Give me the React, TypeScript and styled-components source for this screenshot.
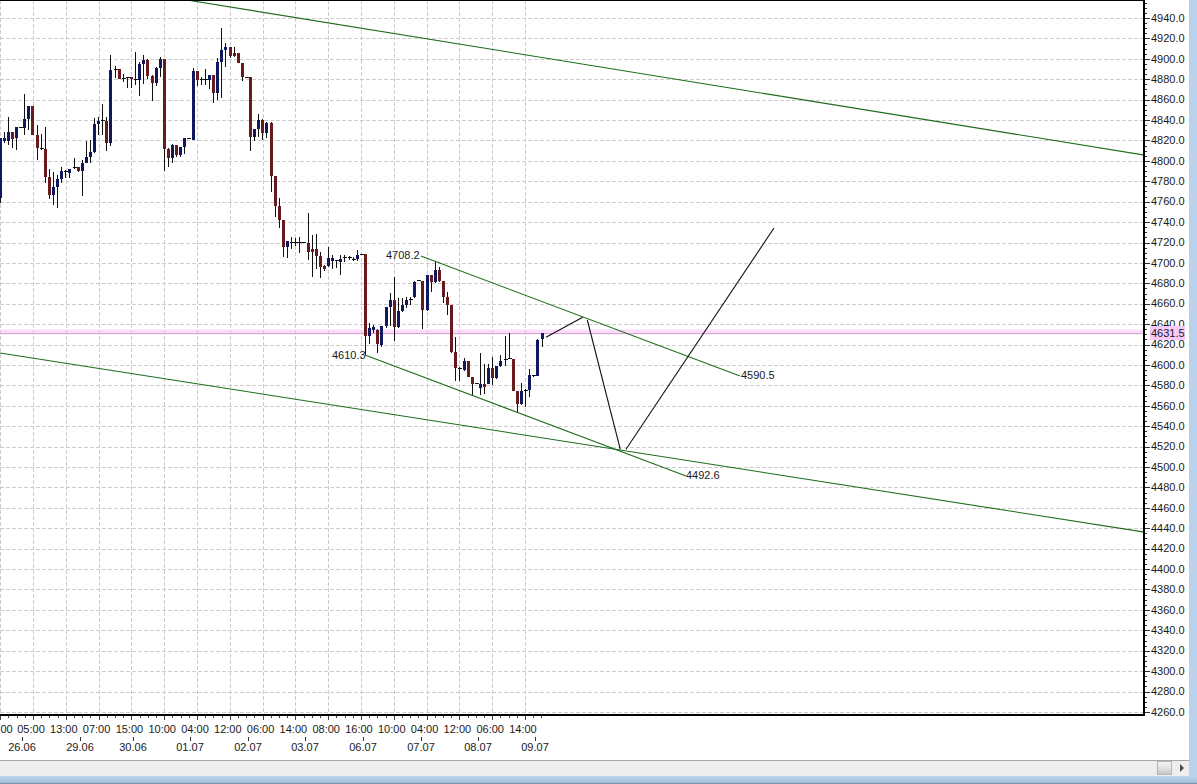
import React from 'react';
import styled, { createGlobalStyle } from 'styled-components';

type Kind = 'r' | 'b' | 'd';
// x, wick top, wick bottom, body top, body bottom, kind
type Candle = [number, number, number, number, number, Kind];

const GlobalStyle = createGlobalStyle`
  html, body {
    margin: 0;
    padding: 0;
    background: #fff;
    overflow: hidden;
  }
`;

const Window = styled.div`
  width: 1197px;
  height: 784px;
  display: flex;
  flex-direction: column;
  overflow: hidden;
  font-family: 'Liberation Sans', Arial, sans-serif;
  font-size: 11px;
  color: #1a1a1a;
`;

const Content = styled.div`
  flex: 1;
  display: flex;
  min-height: 0;
`;

const Body = styled.div`
  width: 1189px;
  display: flex;
  flex-direction: column;
  background: #fff;
`;

const SideChrome = styled.div`
  flex: 1;
  background: #b9d1ea;
`;

const BottomChrome = styled.div`
  height: 8px;
  background: linear-gradient(#bcd3ec, #a9c4df 80%, #5f7f96);
`;

const TopRow = styled.div`
  display: flex;
  height: 716px;
`;

const ChartFrame = styled.div`
  position: relative;
  box-sizing: border-box;
  width: 1145px;
  height: 716px;
  border-top: 1px solid #000;
  border-right: 2px solid #000;
  border-bottom: 2px solid #000;
`;

const ChartCanvas = styled.svg`
  display: block;
`;

const ChartLabel = styled.span<{ $x: number; $y: number }>`
  position: absolute;
  left: ${(p) => p.$x}px;
  top: ${(p) => p.$y - 7}px;
  line-height: 13px;
  white-space: nowrap;
`;

const PriceAxis = styled.div`
  position: relative;
  display: flex;
  width: 44px;
`;

const PriceTicks = styled.svg`
  display: block;
  flex: none;
`;

const PriceLabels = styled.div`
  display: flex;
  flex-direction: column;
  padding-top: 7.8px;
`;

const PriceLabel = styled.div`
  flex: none;
  height: 20.41px;
  line-height: 20.41px;
`;

const CurrentPrice = styled.div`
  position: absolute;
  left: 5px;
  top: 326px;
  width: 35px;
  height: 14px;
  padding-left: 1px;
  box-sizing: border-box;
  line-height: 14px;
  background: #f9c9f9;
`;

const TimeAxis = styled.div`
  flex: 1;
  display: flex;
  flex-direction: column;
  overflow: hidden;
`;

const TimeTicks = styled.svg`
  display: block;
  flex: none;
`;

const TimeRow = styled.div`
  display: flex;
  height: 15px;
  margin-top: 2px;
`;

const DateRow = styled.div`
  display: flex;
  height: 18px;
`;

const TimeCell = styled.div<{ $gap: number }>`
  flex: none;
  width: 0;
  margin-left: ${(p) => p.$gap}px;
  display: flex;
  justify-content: center;
  white-space: nowrap;
  line-height: 15px;
`;

const DateCell = styled(TimeCell)`
  position: relative;
  padding-top: 4px;
  line-height: 13px;

  &::before {
    content: '';
    position: absolute;
    left: 0;
    top: 0;
    width: 1px;
    height: 4px;
    background: #333;
  }
`;

const Scrollbar = styled.div`
  height: 15px;
  display: flex;
  justify-content: flex-end;
  align-items: flex-start;
  border-top: 1px solid #a6a6a6;
  background: #eeeeee;
`;

const Thumb = styled.div`
  box-sizing: border-box;
  width: 15px;
  height: 14px;
  border: 1px solid #b4b4b4;
  background: linear-gradient(#f4f4f4, #e2e2e2 50%, #c6c6c6);
`;

const ArrowRight = styled.div`
  width: 0;
  height: 0;
  margin: 3px 5px 0 8px;
  border-top: 4px solid transparent;
  border-bottom: 4px solid transparent;
  border-left: 4px solid #4a4a4a;
`;

// read off the zoomed crops: 3x coordinates, each group with its own origin
const part1: Candle[] = [
  [1, 355, 550, 355, 533, 'b'], [13, 335, 368, 355, 362, 'b'], [25, 292, 375, 337, 362, 'b'],
  [37, 338, 385, 337, 357, 'r'], [49, 322, 390, 322, 355, 'b'], [61, 320, 325, 322, 322, 'd'],
  [73, 222, 345, 297, 323, 'b'], [85, 258, 330, 258, 297, 'b'], [97, 258, 345, 258, 345, 'r'],
  [112, 316, 420, 345, 383, 'r'], [124, 342, 390, 385, 385, 'd'], [136, 322, 488, 388, 470, 'r'],
  [148, 448, 537, 472, 524, 'r'], [160, 455, 555, 502, 524, 'b'], [172, 465, 563, 478, 500, 'b'],
  [184, 440, 490, 454, 477, 'b'], [196, 450, 475, 455, 455, 'd'], [208, 447, 475, 447, 458, 'b'],
  [223, 415, 447, 442, 442, 'd'], [235, 442, 455, 442, 452, 'r'], [247, 420, 527, 428, 452, 'b'],
  [259, 362, 430, 412, 430, 'b'], [271, 360, 430, 396, 410, 'b'], [283, 295, 398, 312, 396, 'b'],
  [295, 292, 345, 304, 312, 'b'], [307, 252, 345, 302, 302, 'd'], [319, 290, 392, 303, 368, 'r'],
  [331, 105, 378, 150, 368, 'b'], [346, 138, 175, 148, 148, 'd'], [358, 148, 178, 148, 177, 'r'],
  [370, 162, 185, 176, 176, 'd'], [382, 172, 203, 172, 172, 'd'], [394, 170, 203, 170, 178, 'r'],
  [406, 97, 195, 178, 178, 'd'], [418, 125, 227, 132, 180, 'b'], [430, 105, 192, 120, 131, 'b'],
  [442, 117, 178, 120, 167, 'r'], [457, 165, 242, 167, 188, 'r'], [469, 142, 198, 144, 188, 'b'],
  [481, 110, 170, 118, 143, 'b'], [493, 118, 453, 118, 386, 'r'], [505, 385, 440, 387, 415, 'r'],
  [517, 373, 428, 375, 415, 'b'], [529, 375, 410, 376, 405, 'r'], [541, 380, 410, 380, 404, 'b'],
  [553, 355, 402, 354, 380, 'b'], [565, 354, 358, 356, 356, 'd'], [580, 143, 360, 153, 360, 'b'],
  [592, 153, 197, 153, 180, 'r'], [604, 170, 195, 178, 178, 'd'], [616, 148, 195, 178, 178, 'd'],
  [628, 165, 207, 165, 180, 'b'], [640, 165, 248, 165, 218, 'r'], [652, 115, 240, 126, 218, 'b'],
  [664, 25, 233, 90, 126, 'b'], [676, 70, 140, 82, 90, 'b'], [691, 82, 115, 82, 108, 'r'],
  [703, 82, 110, 100, 108, 'r'], [715, 100, 130, 100, 128, 'r'], [727, 128, 182, 130, 172, 'r'],
  [739, 170, 175, 172, 172, 'd'], [751, 172, 392, 172, 350, 'r'], [763, 328, 362, 328, 350, 'b'],
  [775, 283, 350, 300, 327, 'b'], [787, 297, 360, 300, 338, 'r'], [799, 305, 353, 308, 338, 'b'],
];

const part2: Candle[] = [
  [94, 35, 245, 38, 197, 'r'], [106, 198, 320, 198, 287, 'r'], [118, 265, 353, 288, 330, 'r'],
  [130, 330, 440, 330, 410, 'r'], [142, 393, 443, 393, 410, 'b'], [154, 382, 418, 397, 397, 'd'],
  [166, 385, 408, 397, 397, 'd'], [178, 380, 430, 397, 397, 'd'], [190, 395, 399, 397, 397, 'd'],
  [205, 310, 450, 400, 425, 'r'], [217, 375, 500, 418, 425, 'r'], [229, 373, 478, 418, 437, 'r'],
  [241, 425, 505, 438, 472, 'r'], [253, 465, 483, 468, 476, 'r'], [265, 412, 470, 445, 468, 'b'],
  [277, 435, 478, 445, 452, 'b'], [289, 450, 475, 452, 452, 'd'], [301, 435, 495, 448, 455, 'b'],
  [313, 435, 457, 443, 443, 'd'], [328, 437, 450, 441, 441, 'd'], [340, 440, 452, 447, 447, 'd'],
  [352, 420, 452, 436, 447, 'b'], [364, 431, 435, 433, 433, 'd'],
];

const part3: Candle[] = [
  [46, 43, 345, 43, 288, 'r'], [58, 250, 312, 265, 288, 'b'], [70, 255, 280, 262, 270, 'b'],
  [82, 268, 340, 270, 313, 'r'], [94, 258, 322, 258, 315, 'b'], [109, 200, 265, 202, 258, 'b'],
  [121, 160, 258, 180, 200, 'b'], [133, 112, 302, 180, 260, 'r'], [145, 175, 264, 212, 262, 'b'],
  [157, 175, 215, 195, 212, 'b'], [169, 170, 205, 180, 195, 'b'], [181, 172, 195, 178, 178, 'd'],
  [193, 123, 175, 125, 172, 'b'], [205, 120, 124, 122, 122, 'd'], [217, 122, 268, 122, 210, 'r'],
  [232, 105, 212, 105, 210, 'b'], [244, 105, 155, 105, 125, 'r'], [256, 65, 128, 90, 126, 'b'],
  [268, 80, 125, 90, 122, 'r'], [280, 124, 190, 124, 170, 'r'], [292, 155, 225, 170, 195, 'r'],
  [304, 195, 340, 195, 335, 'r'], [316, 292, 422, 336, 385, 'r'], [328, 380, 422, 385, 385, 'd'],
  [343, 355, 392, 362, 390, 'b'], [355, 363, 412, 363, 410, 'r'], [367, 410, 465, 410, 432, 'r'],
  [379, 428, 432, 430, 430, 'd'], [391, 340, 465, 432, 443, 'b'], [403, 372, 462, 432, 442, 'r'],
  [415, 372, 433, 385, 432, 'b'], [427, 350, 435, 385, 413, 'r'], [439, 378, 416, 378, 415, 'b'],
  [451, 345, 380, 363, 378, 'b'], [466, 288, 378, 358, 358, 'd'], [478, 280, 358, 355, 355, 'd'],
  [490, 358, 454, 358, 452, 'r'], [502, 454, 517, 454, 492, 'r'], [514, 430, 495, 453, 493, 'b'],
  [526, 448, 500, 450, 450, 'd'], [538, 388, 472, 405, 450, 'b'], [550, 404, 410, 406, 406, 'd'],
  [562, 297, 408, 300, 408, 'b'], [577, 280, 322, 280, 298, 'b'],
];

const groups: { ox: number; oy: number; items: Candle[] }[] = [
  { ox: 0, oy: 20, items: part1 },
  { ox: 240, oy: 110, items: part2 },
  { ox: 350, oy: 240, items: part3 },
];

const candleColors = { r: '#681a1c', b: '#101860' };

const priceLabels = Array.from({ length: 35 }, (_, i) => (4940 - i * 20).toFixed(1));
const gridY = priceLabels.map((_, i) => 18 + i * 20.41);
// vertical grid and time ticks stop at the last bar
const gridX = [0, ...Array.from({ length: 16 }, (_, i) => 33 + i * 32.8)];

const times = ['05:00', '13:00', '07:00', '15:00', '10:00', '04:00', '12:00', '06:00', '14:00', '08:00', '16:00', '10:00', '04:00', '12:00', '06:00', '14:00'];
const dates: [string, number][] = [
  ['26.06', 22], ['29.06', 58], ['30.06', 53], ['01.07', 57], ['02.07', 58],
  ['03.07', 57], ['06.07', 58], ['07.07', 58], ['08.07', 57], ['09.07', 57],
];

const greenLines = [
  [187, 0, 1144, 155],
  [0, 353, 1144, 532],
  [421, 256, 740, 376],
  [365, 355, 686, 476],
];
const blackLines = [
  [546, 337.3, 582.7, 317.3],
  [587.3, 320, 620.3, 449.3],
  [626, 449.3, 774, 228],
];

const chartLabels: [string, number, number][] = [
  ['4708.2', 386, 255],
  ['4610.3', 332, 355],
  ['4590.5', 741, 375],
  ['4492.6', 686, 475],
];

const Candles: React.FC = () => (
  <g>
    {groups.map((group) =>
      group.items.map(([x, top, bottom, bodyTop, bodyBottom, kind]) => {
        const cx = Math.floor(group.ox + x / 3) + 0.5;
        const y = (v: number) => group.oy + v / 3;
        return (
          <g key={`${group.ox}-${x}`}>
            <line x1={cx} x2={cx} y1={y(top)} y2={y(bottom)} stroke="#111" strokeWidth={1} shapeRendering="crispEdges" />
            {kind === 'd' ? (
              <line x1={cx - 2} x2={cx + 2} y1={y(bodyTop)} y2={y(bodyTop)} stroke="#111" strokeWidth={1} shapeRendering="crispEdges" />
            ) : (
              <rect x={cx - 1.5} y={y(bodyTop)} width={3} height={y(bodyBottom) - y(bodyTop)} fill={candleColors[kind]} shapeRendering="crispEdges" />
            )}
          </g>
        );
      }),
    )}
  </g>
);

const Chart: React.FC = () => (
  <ChartCanvas width={1143} height={713} viewBox="0 1 1143 713">
    <rect x={0} y={329.5} width={1143} height={5} fill="#fbdcfb" />
    {gridY.map((y) => (
      <line key={y} x1={0} x2={1143} y1={Math.round(y) + 0.5} y2={Math.round(y) + 0.5} stroke="#cdcdcd" strokeDasharray="4 2" />
    ))}
    {gridX.map((x) => (
      <line key={x} x1={Math.round(x) + 0.5} x2={Math.round(x) + 0.5} y1={0} y2={714} stroke="#cdcdcd" strokeDasharray="4 2" />
    ))}
    <line x1={0} x2={1143} y1={333.5} y2={333.5} stroke="#d6a8d6" />
    <Candles />
    {greenLines.map(([x1, y1, x2, y2]) => (
      <line key={x1} x1={x1} y1={y1} x2={x2} y2={y2} stroke="#1c6c1c" strokeWidth={1.1} />
    ))}
    {blackLines.map(([x1, y1, x2, y2]) => (
      <line key={x1} x1={x1} y1={y1} x2={x2} y2={y2} stroke="#111" strokeWidth={1.1} />
    ))}
  </ChartCanvas>
);

const App: React.FC = () => (
  <Window>
    <GlobalStyle />
    <Content>
      <Body>
        <TopRow>
          <ChartFrame>
            <Chart />
            {chartLabels.map(([text, x, y]) => (
              <ChartLabel key={text} $x={x} $y={y}>
                {text}
              </ChartLabel>
            ))}
          </ChartFrame>
          <PriceAxis>
            <PriceTicks width={6} height={716}>
              {Array.from({ length: 141 }, (_, i) => {
                const y = Math.round(18 + (i - 3) * 5.1025) + 0.5;
                return <line key={i} x1={0} x2={(i - 3) % 4 === 0 ? 5 : 2} y1={y} y2={y} stroke="#333" />;
              })}
            </PriceTicks>
            <PriceLabels>
              {priceLabels.map((label) => (
                <PriceLabel key={label}>{label}</PriceLabel>
              ))}
            </PriceLabels>
            <CurrentPrice>4631.5</CurrentPrice>
          </PriceAxis>
        </TopRow>
        <TimeAxis>
          <TimeTicks width={1145} height={4}>
            {Array.from({ length: 67 }, (_, i) => {
              const x = Math.round(33 + (i - 4) * 8.2) + 0.5;
              return <line key={i} x1={x} x2={x} y1={0} y2={i % 4 === 0 ? 4 : 2} stroke="#444" />;
            })}
          </TimeTicks>
          <TimeRow>
            <TimeCell $gap={6.5}>00</TimeCell>
            {times.map((time, i) => (
              <TimeCell key={i} $gap={i === 0 ? 24.5 : 32.8}>
                {time}
              </TimeCell>
            ))}
          </TimeRow>
          <DateRow>
            {dates.map(([date, gap]) => (
              <DateCell key={date} $gap={gap}>
                {date}
              </DateCell>
            ))}
          </DateRow>
        </TimeAxis>
        <Scrollbar>
          <Thumb />
          <ArrowRight />
        </Scrollbar>
      </Body>
      <SideChrome />
    </Content>
    <BottomChrome />
  </Window>
);

export default App;
